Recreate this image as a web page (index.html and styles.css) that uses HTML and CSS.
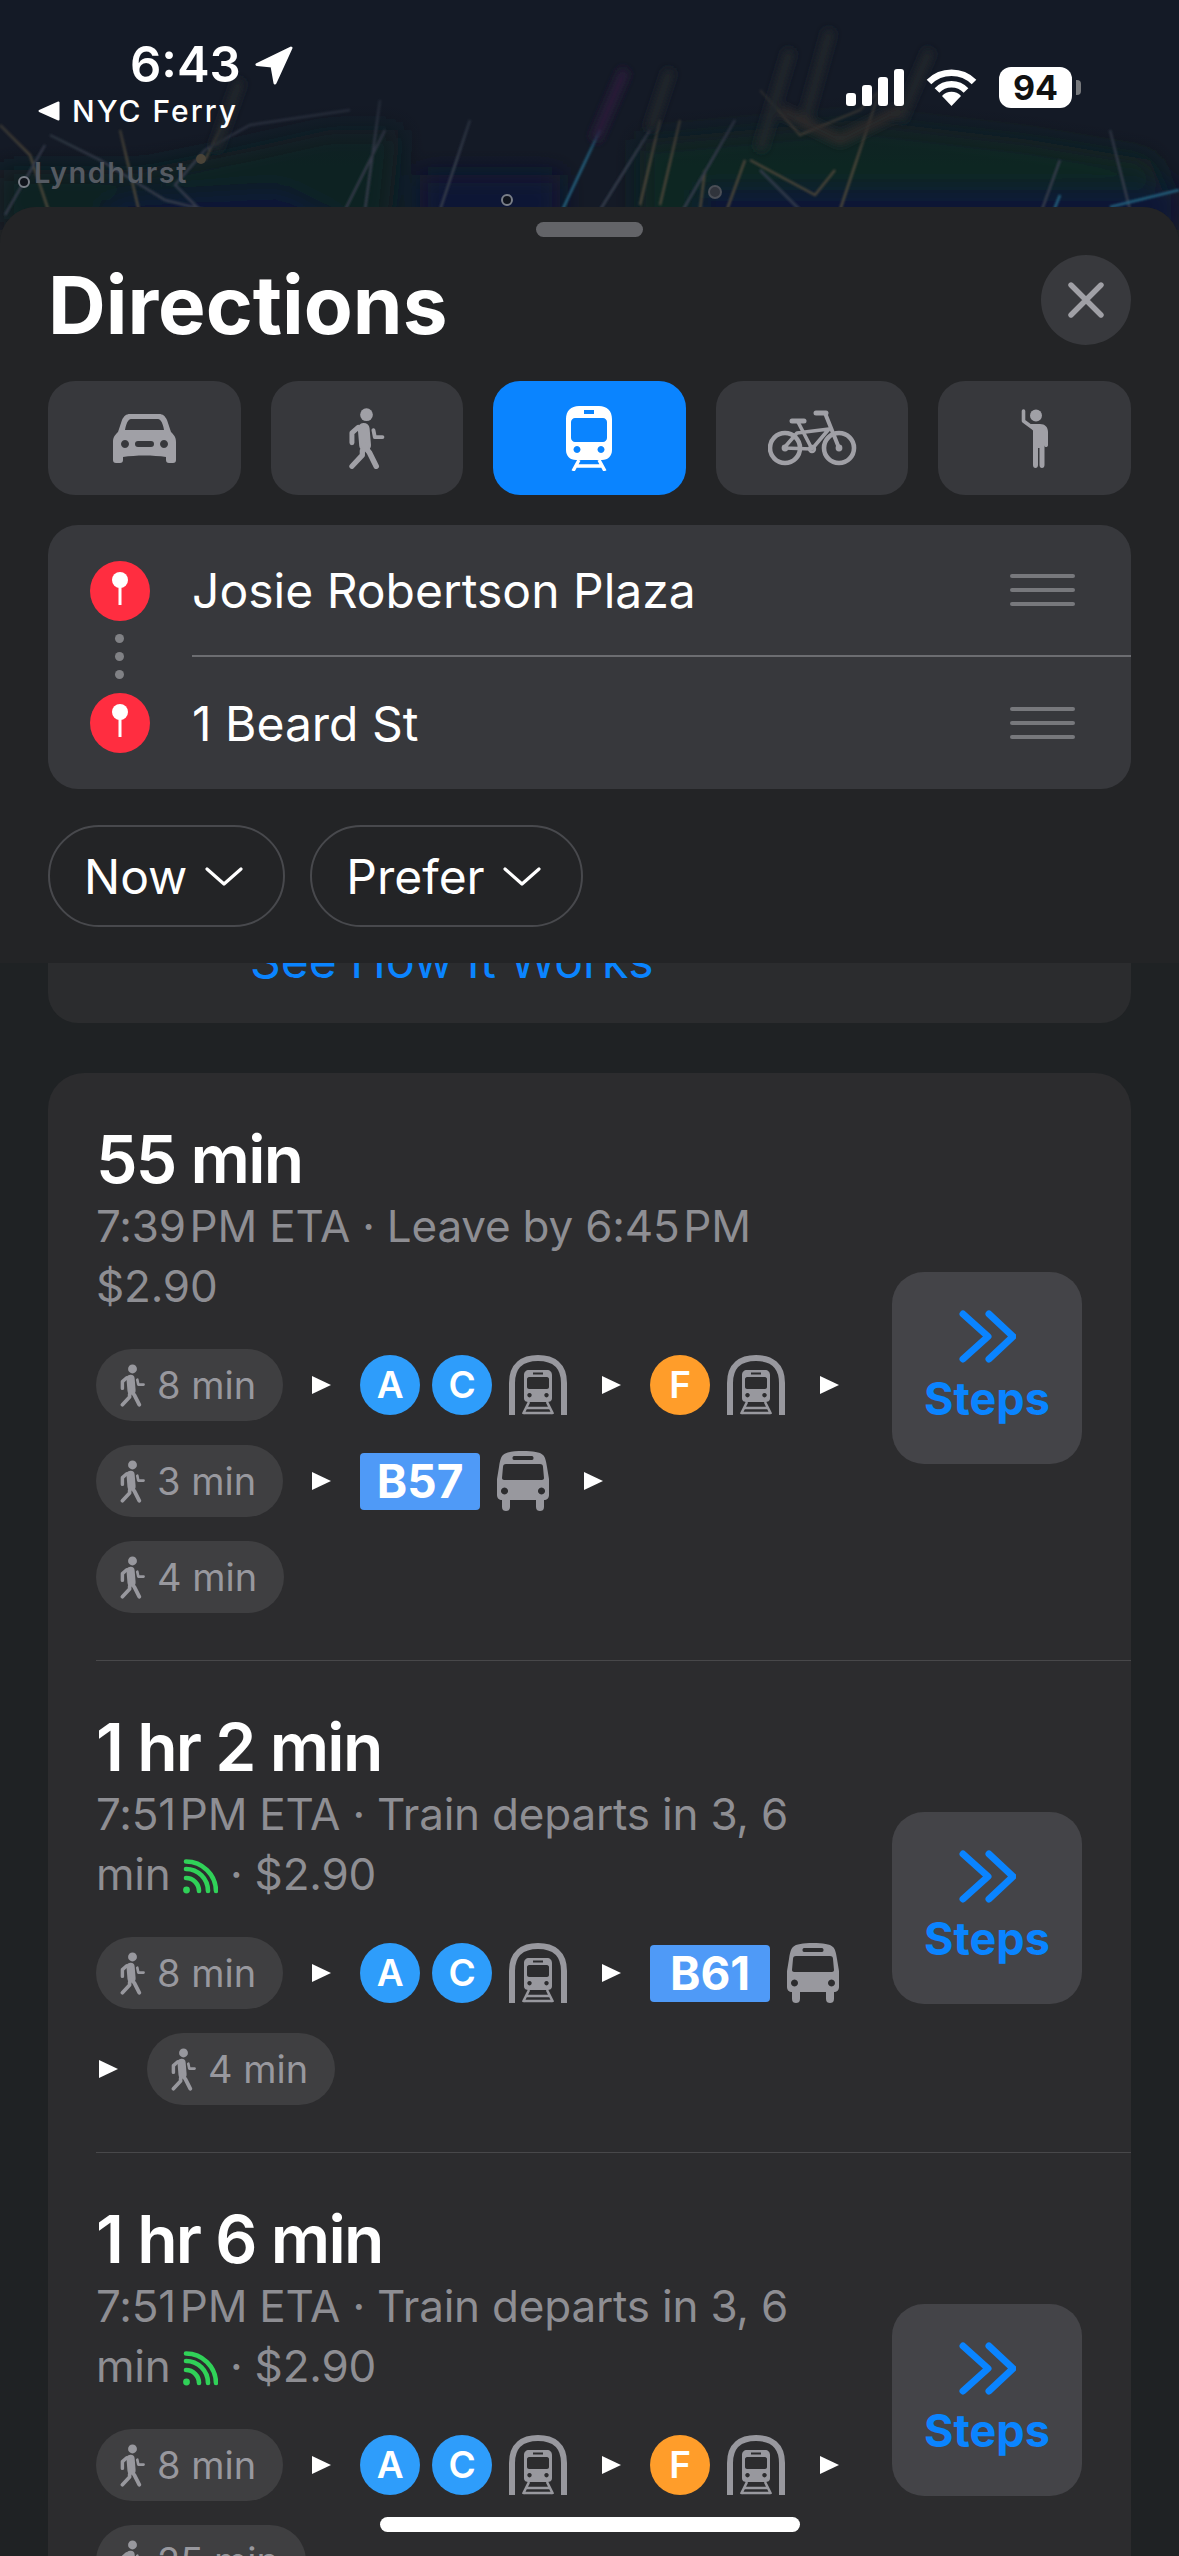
FILE: index.html
```html
<!DOCTYPE html>
<html lang="en">
<head>
  <meta charset="UTF-8" />
  <meta name="viewport" content="width=device-width, initial-scale=1.0"/>
  <title>Directions</title>
  <link rel="stylesheet" href="styles.css">
</head>
<body>

  <!-- shared icons -->
  <svg class="defs" width="0" height="0">
    <symbol id="i-walk" viewBox="0 0 26 44">
      <circle cx="13" cy="4.800" r="4.600" fill="currentColor"/>
      <g fill="none" stroke="currentColor" stroke-linecap="round" stroke-linejoin="round">
        <path d="M11 15 L12 27" stroke-width="8.500"/>
        <path d="M7 14 L2.500 18 L2.500 25" stroke-width="3.600"/>
        <path d="M18 16 L19 21 L24.500 21" stroke-width="2.800"/>
        <path d="M11 27 L15 32 L20 42" stroke-width="4"/>
        <path d="M10 31 L10 34 L2.500 42" stroke-width="3.800"/>
      </g>
    </symbol>
    <symbol id="i-car" viewBox="0 0 63 49">
      <path fill="currentColor" fill-rule="evenodd" d="M17 0 H46 C50 0 52 2 54 6 L58 18 C61 21 63 23 63 28 V46 C63 48 62 49 60 49 H56 C54 49 53 48 53 46 V43 C40 41 23 41 10 43 V46 C10 48 9 49 7 49 H3 C1 49 0 48 0 46 V28 C0 23 2 21 5 18 L9 6 C11 2 13 0 17 0 Z M12 16 H51 C50 10 48 5 45 5 H18 C15 5 13 10 12 16 Z M12 26 a4 4 0 1 0 0.010 0 Z M51 26 a4 4 0 1 0 0.010 0 Z M25 27 a3 3 0 0 0 0 6 H38 a3 3 0 0 0 0 -6 Z"/>
    </symbol>
    <symbol id="i-train" viewBox="0 0 46 65">
      <path fill="currentColor" fill-rule="evenodd" d="M13 0 H33 C41 0 46 5 46 13 V44 C46 50 42 54 36 54 H10 C4 54 0 50 0 44 V13 C0 5 5 0 13 0 Z M18 4 V8 H28 V4 Z M9 12 C7 12 5 14 5 16 V32 C5 34 7 36 9 36 H37 C39 36 41 34 41 32 V16 C41 14 39 12 37 12 Z M11 40 a3.500 3.500 0 1 0 0.010 0 Z M35 40 a3.500 3.500 0 1 0 0.010 0 Z"/>
      <path fill="none" stroke="currentColor" stroke-width="3.400" d="M13 54 L7 65 M33 54 L39 65 M10 60 H36"/>
    </symbol>
    <symbol id="i-bike" viewBox="0 0 89 57">
      <g fill="none" stroke="currentColor" stroke-linecap="round" stroke-linejoin="round">
        <circle cx="17" cy="38" r="15" stroke-width="4.600"/>
        <circle cx="71" cy="38" r="15" stroke-width="4.600"/>
        <path d="M24 11 H36" stroke-width="5"/>
        <path d="M48 3 H58" stroke-width="5"/>
        <path d="M57 3 L71 38" stroke-width="4"/>
        <path d="M30 12 L44 39 L61 19 L29 23 L16 38 L44 39" stroke-width="3.600"/>
        <circle cx="44" cy="39" r="3" stroke-width="2.400"/>
      </g>
      <circle cx="71" cy="38" r="3.400" fill="currentColor"/>
      <circle cx="17" cy="38" r="3.400" fill="currentColor"/>
    </symbol>
    <symbol id="i-hail" viewBox="0 0 28 59">
      <circle cx="15" cy="6.500" r="6" fill="currentColor"/>
      <path fill="currentColor" d="M9 15 H19 C24 15 27 18 27 23 V36 C27 37.500 26 38 25 38 C24 38 23.500 37.500 23.500 36 V26 V56 C23.500 58 22.500 59 21 59 C19.500 59 18.500 58 18.500 56 V39 H17 V56 C17 58 16 59 14.500 59 C13 59 12 58 12 56 V22 C12 20 9 19 9 15 Z"/>
      <path fill="none" stroke="currentColor" stroke-width="3.600" stroke-linecap="round" stroke-linejoin="round" d="M2.500 2 V12 L12 19"/>
    </symbol>
    <symbol id="i-subway" viewBox="0 0 58 60">
      <path fill="none" stroke="currentColor" stroke-width="6" d="M3 60 V28 C3 10 14 3 29 3 C44 3 55 10 55 28 V60"/>
      <path fill="currentColor" fill-rule="evenodd" d="M20 15 H38 C41 15 43 17 43 20 V43 C43 46 41 47 38 47 H20 C17 47 15 46 15 43 V20 C15 17 17 15 20 15 Z M24 17.500 V19.500 H34 V17.500 Z M20 22 C19 22 18 23 18 24 V32 C18 33 19 34 20 34 H38 C39 34 40 33 40 32 V24 C40 23 39 22 38 22 Z M20.500 38 a2.200 2.200 0 1 0 0.010 0 Z M37.500 38 a2.200 2.200 0 1 0 0.010 0 Z"/>
      <path fill="none" stroke="currentColor" stroke-width="2.600" d="M20 47 L14 59 M38 47 L44 59 M17 53 H41 M15 58 H43"/>
    </symbol>
    <symbol id="i-bus" viewBox="0 0 52 60">
      <path fill="currentColor" fill-rule="evenodd" d="M26 0 C36 0 43 1 46 4 C48 6 49 9 50 16 L52 28 V44 C52 47 50 49 47 49 V56 C47 59 45 60 43 60 C41 60 39 59 39 56 V49 H13 V56 C13 59 11 60 9 60 C7 60 5 59 5 56 V49 C2 49 0 47 0 44 V28 L2 16 C3 9 4 6 6 4 C9 1 16 0 26 0 Z M17 5 C15 5 15 9 17 9 H35 C37 9 37 5 35 5 Z M9 13 C7 13 6 14 6 16 L5 27 C5 28 6 29 7 29 H45 C46 29 47 28 47 27 L46 16 C46 14 45 13 43 13 Z M7.500 36.500 a3.500 3.500 0 1 0 0.010 0 Z M44.500 36.500 a3.500 3.500 0 1 0 0.010 0 Z"/>
    </symbol>
    <symbol id="i-pin" viewBox="0 0 60 60">
      <circle cx="30" cy="30" r="30" fill="#ff2d40"/>
      <circle cx="30" cy="19" r="8" fill="#fff"/>
      <rect x="28.500" y="22" width="3" height="22" fill="#fff"/>
    </symbol>
    <symbol id="i-chev" viewBox="0 0 38 19">
      <path fill="none" stroke="#fff" stroke-width="3.200" stroke-linecap="round" stroke-linejoin="round" d="M2 2 L19 17 L36 2"/>
    </symbol>
    <symbol id="i-steps" viewBox="0 0 57 53">
      <path fill="none" stroke="currentColor" stroke-width="7" stroke-linecap="round" stroke-linejoin="round" d="M4 4 L29 26.500 L4 49 M30 4 L54 26.500 L30 49"/>
    </symbol>
    <symbol id="i-live" viewBox="0 0 35 35">
      <circle cx="3.500" cy="31" r="3.400" fill="currentColor"/>
      <path fill="none" stroke="currentColor" stroke-width="4.600" stroke-linecap="round" d="M3 19 A13 13 0 0 1 16 32 M3 10 A22 22 0 0 1 25 32 M3 2.500 A30 30 0 0 1 33 32"/>
    </symbol>
  </svg>

  <div class="screen">

    <!-- map behind the sheet -->
    <svg class="map" viewBox="0 0 1179 230" width="1179" height="230">
      <defs>
        <filter id="soft" x="-20%" y="-50%" width="140%" height="200%"><feGaussianBlur stdDeviation="12"/></filter>
        <filter id="streak" x="-20%" y="-50%" width="140%" height="200%"><feGaussianBlur stdDeviation="4"/></filter>
        <filter id="thin" x="-5%" y="-20%" width="110%" height="140%"><feGaussianBlur stdDeviation="1"/></filter>
        <linearGradient id="fade" x1="0" y1="0" x2="0" y2="1">
          <stop offset="0" stop-color="#141a26"/>
          <stop offset="0.3" stop-color="#141a26" stop-opacity="0.85"/>
          <stop offset="0.58" stop-color="#141a26" stop-opacity="0.3"/>
          <stop offset="0.72" stop-color="#141a26" stop-opacity="0"/>
        </linearGradient>
      </defs>
      <rect width="1179" height="230" fill="#141a26"/>
      <g filter="url(#soft)">
        <path d="M0 170 H140 L240 150 L330 130 L400 130 L390 230 H0 Z" fill="#0e2422"/>
        <path d="M110 200 L280 190 L360 230 H100 Z" fill="#0b1838"/>
        <path d="M420 175 H560 V230 H420 Z" fill="#0b1834"/>
        <path d="M640 140 L860 120 L1030 140 L1150 160 L1179 230 H640 Z" fill="#0e2624"/>
        <path d="M700 190 H1179 V230 H700 Z" fill="#0b1838"/>
      </g>
      <g fill="none" stroke-width="2.500" filter="url(#thin)">
        <path stroke="#4a4438" d="M0 125 L30 155 L50 215 M120 130 L140 215 M225 120 L205 160"/>
        <path stroke="#343b4a" d="M5 215 L25 180 L45 145 M50 135 L100 160 L165 200 L205 210 M200 210 L175 185 L205 150 L250 125 L350 110 M380 100 L365 210 M345 210 L385 130 M470 120 L440 210 M650 130 L600 210"/>
        <path stroke="#4a4438" d="M660 120 L640 205 M680 120 L660 205 M705 170 L700 210 M745 160 L725 215 M760 90 L800 135 L860 110 L880 90 L860 150 L840 210 M750 160 L815 195 L835 170"/>
        <path stroke="#343b4a" d="M735 120 L680 215 M1110 130 L1130 210 M1060 160 L1040 215 M760 170 L800 210"/>
        <path stroke="#235f7c" d="M1179 190 L1110 207 M1060 195 L1052 215 M600 130 L560 215"/>
      </g>
      <rect width="1179" height="230" fill="url(#fade)"/>
      <g filter="url(#streak)" fill="none" stroke-width="10">
        <path stroke="#24262c" d="M790 50 L760 150 M830 30 L805 120 M930 50 L900 120 M670 70 L650 130 M240 80 L215 150"/>
        <path stroke="#2a1a3a" d="M625 70 L595 140"/>
        <path stroke="#2e2c2a" d="M780 110 L840 140 L900 110"/>
      </g>
      <circle cx="24" cy="182" r="5" fill="#10141c" stroke="#7a7f88" stroke-width="2"/>
      <circle cx="507" cy="200" r="5" fill="#10141c" stroke="#7a7f88" stroke-width="2"/>
      <circle cx="715" cy="192" r="6" fill="#30343c" stroke="#4a4e56" stroke-width="2"/>
      <circle cx="201" cy="159" r="5" fill="#4a4438"/>
      <text class="map-label" x="34" y="183">Lyndhurst</text>
    </svg>

    <div class="status">
      <div class="status-left">
        <div class="clock">
          <span>6:43</span>
          <svg width="38" height="39" viewBox="0 0 38 39"><path fill="#fff" stroke="#fff" stroke-width="3" stroke-linejoin="round" d="M36 2 L2 18.500 L17 20 L20 37 Z"/></svg>
        </div>
        <div class="back-app">
          <svg width="22" height="20" viewBox="0 0 22 20"><path fill="#fff" stroke="#fff" stroke-width="2" stroke-linejoin="round" d="M1.500 10 L20.500 1.500 V18.500 Z"/></svg>
          <span>NYC Ferry</span>
        </div>
      </div>
      <div class="status-right">
        <svg width="58" height="37" viewBox="0 0 58 37">
          <rect x="0" y="24" width="10" height="13" rx="3" fill="#fff"/>
          <rect x="16" y="16" width="10" height="21" rx="3" fill="#fff"/>
          <rect x="32" y="8" width="10" height="29" rx="3" fill="#fff"/>
          <rect x="48" y="0" width="10" height="37" rx="3" fill="#fff"/>
        </svg>
        <svg width="51" height="37" viewBox="0 0 51 37">
          <path fill="none" stroke="#fff" stroke-width="6.500" d="M3 13 A32 32 0 0 1 48 13 M11 21.500 A20 20 0 0 1 40 21.500"/>
          <path fill="#fff" d="M25.500 37 L16 27 A13 13 0 0 1 35 27 Z"/>
        </svg>
        <div class="battery"><span>94</span><i class="battery-nub"></i></div>
      </div>
    </div>

    <div class="sheet">
      <div class="sheet-top">
        <div class="handle"></div>
        <div class="head">
          <h1>Directions</h1>
          <div class="close">
            <svg width="36" height="36" viewBox="0 0 36 36"><path fill="none" stroke="currentColor" stroke-width="5.400" stroke-linecap="round" d="M3 3 L33 33 M33 3 L3 33"/></svg>
          </div>
        </div>

        <div class="modes">
          <div class="mode"><svg width="63" height="49"><use href="#i-car"/></svg></div>
          <div class="mode"><svg width="37" height="61"><use href="#i-walk"/></svg></div>
          <div class="mode active"><svg width="46" height="65"><use href="#i-train"/></svg></div>
          <div class="mode"><svg width="89" height="57"><use href="#i-bike"/></svg></div>
          <div class="mode"><svg width="28" height="59"><use href="#i-hail"/></svg></div>
        </div>

        <div class="stops">
          <div class="stop">
            <svg class="pin" width="60" height="60"><use href="#i-pin"/></svg>
            <div class="stop-body line-under">
              <span>Josie Robertson Plaza</span>
              <div class="grip"><i></i><i></i><i></i></div>
            </div>
          </div>
          <div class="stop">
            <svg class="pin" width="60" height="60"><use href="#i-pin"/></svg>
            <div class="stop-body">
              <span>1 Beard St</span>
              <div class="grip"><i></i><i></i><i></i></div>
            </div>
          </div>
          <div class="dots"><i></i><i></i><i></i></div>
        </div>

        <div class="filters">
          <div class="filter">Now <svg width="38" height="19"><use href="#i-chev"/></svg></div>
          <div class="filter">Prefer <svg width="38" height="19"><use href="#i-chev"/></svg></div>
        </div>
      </div>

      <div class="peek"><span>See How It Works</span></div>

      <div class="routes">

        <div class="route">
          <div class="route-info">
            <div class="dur">55 min</div>
            <div class="meta">7:39&#8202;PM ETA · Leave by 6:45&#8202;PM<br>$2.90</div>
            <div class="trip">
              <div class="trip-row">
                <div class="walk"><svg width="25" height="43"><use href="#i-walk"/></svg>8 min</div>
                <i class="arrow"></i>
                <div class="leg"><b class="bullet blue">A</b><b class="bullet blue">C</b><svg class="mode-ic" width="58" height="60"><use href="#i-subway"/></svg></div>
                <i class="arrow"></i>
                <div class="leg"><b class="bullet orange">F</b><svg class="mode-ic" width="58" height="60"><use href="#i-subway"/></svg></div>
                <i class="arrow"></i>
              </div>
              <div class="trip-row">
                <div class="walk"><svg width="25" height="43"><use href="#i-walk"/></svg>3 min</div>
                <i class="arrow"></i>
                <div class="leg"><b class="tag">B57</b><svg class="mode-ic" width="52" height="60"><use href="#i-bus"/></svg></div>
                <i class="arrow"></i>
              </div>
              <div class="trip-row">
                <div class="walk"><svg width="25" height="43"><use href="#i-walk"/></svg>4 min</div>
              </div>
            </div>
          </div>
          <div class="steps"><svg width="57" height="53"><use href="#i-steps"/></svg><span>Steps</span></div>
        </div>

        <div class="route">
          <div class="route-info">
            <div class="dur">1 hr 2 min</div>
            <div class="meta">7:51&#8202;PM ETA · Train departs in 3, 6<br>min <svg class="live" width="35" height="35"><use href="#i-live"/></svg> · $2.90</div>
            <div class="trip">
              <div class="trip-row">
                <div class="walk"><svg width="25" height="43"><use href="#i-walk"/></svg>8 min</div>
                <i class="arrow"></i>
                <div class="leg"><b class="bullet blue">A</b><b class="bullet blue">C</b><svg class="mode-ic" width="58" height="60"><use href="#i-subway"/></svg></div>
                <i class="arrow"></i>
                <div class="leg"><b class="tag">B61</b><svg class="mode-ic" width="52" height="60"><use href="#i-bus"/></svg></div>
              </div>
              <div class="trip-row">
                <i class="arrow first"></i>
                <div class="walk"><svg width="25" height="43"><use href="#i-walk"/></svg>4 min</div>
              </div>
            </div>
          </div>
          <div class="steps"><svg width="57" height="53"><use href="#i-steps"/></svg><span>Steps</span></div>
        </div>

        <div class="route">
          <div class="route-info">
            <div class="dur">1 hr 6 min</div>
            <div class="meta">7:51&#8202;PM ETA · Train departs in 3, 6<br>min <svg class="live" width="35" height="35"><use href="#i-live"/></svg> · $2.90</div>
            <div class="trip">
              <div class="trip-row">
                <div class="walk"><svg width="25" height="43"><use href="#i-walk"/></svg>8 min</div>
                <i class="arrow"></i>
                <div class="leg"><b class="bullet blue">A</b><b class="bullet blue">C</b><svg class="mode-ic" width="58" height="60"><use href="#i-subway"/></svg></div>
                <i class="arrow"></i>
                <div class="leg"><b class="bullet orange">F</b><svg class="mode-ic" width="58" height="60"><use href="#i-subway"/></svg></div>
                <i class="arrow"></i>
              </div>
              <div class="trip-row">
                <div class="walk"><svg width="25" height="43"><use href="#i-walk"/></svg>25 min</div>
              </div>
            </div>
          </div>
          <div class="steps"><svg width="57" height="53"><use href="#i-steps"/></svg><span>Steps</span></div>
        </div>

      </div>
    </div>

    <div class="home-bar"></div>
  </div>

</body>
</html>
```

FILE: styles.css
```css
* {
  box-sizing: border-box;
  margin: 0;
  padding: 0;
}

body {
  background: #1f2224;
  font-family: 'Inter', 'Liberation Sans', sans-serif;
  color: #fff;
}

.defs {
  position: absolute;
}

.screen {
  position: relative;
  width: 1179px;
  height: 2556px;
  overflow: hidden;
}

.map {
  position: absolute;
  top: 0;
  left: 0;
}

.map-label {
  font-family: 'Inter', sans-serif;
  font-size: 29px;
  font-weight: 600;
  letter-spacing: 1.5px;
  fill: #555a62;
}

/* status bar */
.status {
  position: relative;
  height: 207px;
  display: flex;
  justify-content: space-between;
  align-items: flex-start;
}

.status-left {
  padding: 40px 0 0 38px;
}

.clock {
  display: flex;
  align-items: center;
  gap: 14px;
  padding-left: 92px;
  font-size: 49px;
  line-height: 50px;
  font-weight: 600;
}

.back-app {
  display: flex;
  align-items: center;
  gap: 12px;
  margin-top: 3px;
  font-size: 30px;
  line-height: 36px;
  font-weight: 500;
  letter-spacing: 2px;
}

.status-right {
  display: flex;
  align-items: center;
  gap: 22px;
  padding: 67px 107px 0 0;
}

.battery {
  position: relative;
  width: 73px;
  height: 41px;
  background: #fff;
  border-radius: 12px;
  color: #111;
  font-size: 34px;
  line-height: 41px;
  font-weight: 700;
  text-align: center;
}

.battery-nub {
  position: absolute;
  top: 13px;
  right: -9px;
  width: 5px;
  height: 15px;
  background: #77797c;
  border-radius: 0 4px 4px 0;
}

/* sheet */
.sheet {
  position: relative;
  height: 2349px;
  background: #1f2224;
  border-radius: 36px 36px 0 0;
  overflow: hidden;
}

.sheet-top {
  background: #232426;
  padding: 15px 48px 36px;
}

.handle {
  width: 107px;
  height: 15px;
  margin: 0 auto 18px;
  background: #636468;
  border-radius: 8px;
}

.head {
  display: flex;
  justify-content: space-between;
  align-items: center;
  height: 90px;
}

.head h1 {
  font-size: 80px;
  line-height: 90px;
  font-weight: 700;
  padding-top: 10px;
}

.close {
  width: 90px;
  height: 90px;
  border-radius: 50%;
  background: #38393d;
  color: #a0a0a6;
  display: flex;
  justify-content: center;
  align-items: center;
}

.modes {
  display: grid;
  grid-template-columns: repeat(5, 1fr);
  gap: 30px;
  margin-top: 36px;
}

.mode {
  height: 114px;
  background: #37383c;
  border-radius: 27px;
  color: #a0a0a6;
  display: flex;
  justify-content: center;
  align-items: center;
}

.mode.active {
  background: #0a84ff;
  color: #fff;
}

.stops {
  position: relative;
  margin-top: 30px;
  background: #37383c;
  border-radius: 30px;
  overflow: hidden;
}

.stop {
  display: flex;
  align-items: center;
  height: 132px;
  padding-left: 42px;
}

.pin {
  flex: none;
  margin-right: 42px;
}

.stop-body {
  flex: 1;
  height: 100%;
  display: flex;
  justify-content: space-between;
  align-items: center;
  padding-right: 56px;
  font-size: 48px;
}

.line-under {
  border-bottom: 2px solid #6c6d71;
}

.grip i {
  display: block;
  width: 65px;
  height: 4px;
  margin: 10px 0;
  background: #77787c;
  border-radius: 2px;
}

.dots {
  position: absolute;
  top: 109px;
  left: 67px;
  display: flex;
  flex-direction: column;
  gap: 9px;
}

.dots i {
  width: 9px;
  height: 9px;
  background: #808185;
  border-radius: 50%;
}

.filters {
  display: flex;
  gap: 25px;
  margin-top: 36px;
}

.filter {
  display: flex;
  align-items: center;
  gap: 18px;
  height: 102px;
  padding: 0 40px 0 34px;
  border: 2px solid #48494d;
  border-radius: 51px;
  font-size: 48px;
}

/* card sliding under the header */
.peek {
  height: 60px;
  margin: 0 48px;
  padding-left: 202px;
  background: #2b2c2e;
  border-radius: 0 0 30px 30px;
  overflow: hidden;
  color: #0a84ff;
  font-size: 48px;
  line-height: 60px;
}

.peek span {
  display: block;
  margin-top: -32px;
}

.routes {
  margin: 50px 48px 0;
  background: #2c2c2e;
  border-radius: 36px 36px 0 0;
  overflow: hidden;
}

.route {
  display: flex;
  align-items: center;
  margin-left: 48px;
  padding: 49px 49px 47px 0;
  border-top: 1px solid #48484a;
}

.route:first-child {
  border-top: 0;
}

.route-info {
  flex: 1;
}

.dur {
  font-size: 66px;
  line-height: 74px;
  font-weight: 600;
  letter-spacing: -1.7px;
}

.meta {
  font-size: 44px;
  line-height: 60px;
  letter-spacing: -0.2px;
  color: #8e8e93;
}

.live {
  color: #30d158;
  vertical-align: -4px;
}

.trip {
  display: flex;
  flex-direction: column;
  gap: 24px;
  margin-top: 33px;
}

.trip-row {
  display: flex;
  align-items: center;
  gap: 29px;
  height: 72px;
}

.walk {
  display: flex;
  align-items: center;
  gap: 12px;
  height: 72px;
  padding: 0 27px 0 24px;
  background: #3f3f41;
  border-radius: 36px;
  color: #98989e;
  font-size: 38px;
}

.arrow {
  flex: none;
  width: 0;
  height: 0;
  border-left: 19px solid #fff;
  border-top: 9px solid transparent;
  border-bottom: 9px solid transparent;
}

.arrow.first {
  margin-left: 3px;
}

.leg {
  display: flex;
  align-items: center;
  gap: 12px;
}

.mode-ic {
  flex: none;
  margin: 0 6px 0 5px;
  color: #98989e;
}

.bullet {
  width: 60px;
  height: 60px;
  border-radius: 50%;
  font-size: 37px;
  line-height: 60px;
  font-weight: 600;
  text-align: center;
}

.blue {
  background: #2e9dfb;
}

.orange {
  background: #ff9d2a;
}

.tag {
  width: 120px;
  height: 57px;
  background: #4f9af7;
  border-radius: 4px;
  font-size: 46px;
  line-height: 57px;
  font-weight: 700;
  text-align: center;
}

.steps {
  flex: none;
  width: 190px;
  height: 192px;
  display: flex;
  flex-direction: column;
  align-items: center;
  justify-content: center;
  gap: 10px;
  background: #444448;
  border-radius: 32px;
  color: #0a84ff;
  font-size: 45px;
  line-height: 52px;
  font-weight: 700;
}

.home-bar {
  position: absolute;
  left: 380px;
  top: 2517px;
  width: 420px;
  height: 15px;
  background: #fff;
  border-radius: 8px;
}
```
